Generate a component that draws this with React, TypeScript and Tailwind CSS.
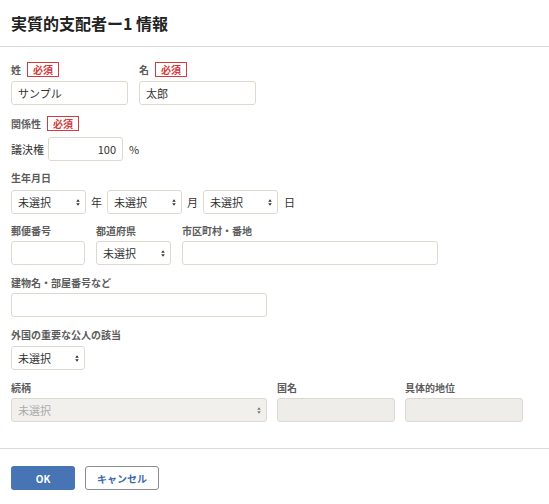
const font = { fontFamily: '"Noto Sans CJK JP", "Noto Sans", sans-serif' };

function Required() {
  return (
    <span className="ml-[6px] inline-flex items-center h-[15px] px-[5px] border border-[#d23c3c] text-[#d23c3c] text-[10px] font-bold leading-none">
      必須
    </span>
  );
}

function Label({ children, req = false }: { children: React.ReactNode; req?: boolean }) {
  return (
    <div className="flex items-center h-[15px] text-[10px] font-bold text-[#5c5c5c]">
      <span>{children}</span>
      {req && <Required />}
    </div>
  );
}

function Input({ w, value = '', right = false, disabled = false }: { w: string; value?: string; right?: boolean; disabled?: boolean }) {
  return (
    <div
      className={`${w} h-[24px] rounded-[3px] border border-[#ddd9cf] flex items-center px-[6px] text-[11px] text-[#333] ${
        right ? 'justify-end' : ''
      } ${disabled ? 'bg-[#eeede9]' : 'bg-white'}`}
    >
      {value}
    </div>
  );
}

function Select({ w, disabled = false }: { w: string; disabled?: boolean }) {
  return (
    <div
      className={`${w} h-[24px] rounded-[3px] border border-[#ddd9cf] flex items-center justify-between pl-[6px] pr-[5px] text-[11px] ${
        disabled ? 'bg-[#f1f0ed] text-[#aaa]' : 'bg-white text-[#333]'
      }`}
    >
      <span>未選択</span>
      <svg width="4" height="7" viewBox="0 0 4 7" className={disabled ? 'text-[#777]' : 'text-[#333]'}>
        <path d="M2 0.3 L3.8 2.8 L0.2 2.8 Z" fill="currentColor" />
        <path d="M2 6.7 L3.8 4.2 L0.2 4.2 Z" fill="currentColor" />
      </svg>
    </div>
  );
}

export default function App() {
  return (
    <div className="w-[549px] h-[504px] bg-white" style={font}>
      <div className="h-[47px] flex items-center px-[11px] border-b border-[#ddd9d2]">
        <h1 className="text-[16px] font-bold text-[#222] leading-none">実質的支配者ー1 情報</h1>
      </div>

      <div className="px-[11px] pt-[15px] pb-[26px] border-b border-[#ddd9d2]">
        <div className="flex gap-[11px]">
          <div>
            <Label req>姓</Label>
            <div className="mt-[4px]">
              <Input w="w-[117px]" value="サンプル" />
            </div>
          </div>
          <div>
            <Label req>名</Label>
            <div className="mt-[4px]">
              <Input w="w-[117px]" value="太郎" />
            </div>
          </div>
        </div>

        <div className="mt-[11px]">
          <Label req>関係性</Label>
        </div>
        <div className="mt-[6px] flex items-center text-[11px] text-[#333]">
          <span className="w-[37px] text-[11px] text-[#333]">議決権</span>
          <Input w="w-[75px]" value="100" right />
          <span className="ml-[6px]">%</span>
        </div>

        <div className="mt-[9px]">
          <Label>生年月日</Label>
        </div>
        <div className="mt-[5px] flex items-center text-[11px] text-[#333]">
          <Select w="w-[75px]" />
          <span className="w-[21px] text-center">年</span>
          <Select w="w-[75px]" />
          <span className="w-[21px] text-center">月</span>
          <Select w="w-[75px]" />
          <span className="ml-[6px]">日</span>
        </div>

        <div className="mt-[9px] flex gap-[11px]">
          <div>
            <Label>郵便番号</Label>
            <div className="mt-[3px]">
              <Input w="w-[74px]" />
            </div>
          </div>
          <div>
            <Label>都道府県</Label>
            <div className="mt-[3px]">
              <Select w="w-[75px]" />
            </div>
          </div>
          <div>
            <Label>市区町村・番地</Label>
            <div className="mt-[3px]">
              <Input w="w-[256px]" />
            </div>
          </div>
        </div>

        <div className="mt-[10px]">
          <Label>建物名・部屋番号など</Label>
          <div className="mt-[3px]">
            <Input w="w-[256px]" />
          </div>
        </div>

        <div className="mt-[10px]">
          <Label>外国の重要な公人の該当</Label>
          <div className="mt-[4px]">
            <Select w="w-[74px]" />
          </div>
        </div>

        <div className="mt-[10px] flex gap-[10px]">
          <div>
            <Label>続柄</Label>
            <div className="mt-[3px]">
              <Select w="w-[256px]" disabled />
            </div>
          </div>
          <div>
            <Label>国名</Label>
            <div className="mt-[3px]">
              <Input w="w-[118px]" disabled />
            </div>
          </div>
          <div>
            <Label>具体的地位</Label>
            <div className="mt-[3px]">
              <Input w="w-[118px]" disabled />
            </div>
          </div>
        </div>
      </div>

      <div className="px-[11px] pt-[17px] flex gap-[10px]">
        <button className="w-[64px] h-[24px] rounded-[3px] bg-[#4674b4] text-white text-[10px] font-bold">OK</button>
        <button className="w-[74px] h-[24px] rounded-[3px] border border-[#8c8c8c] bg-white text-[#3a6aae] text-[10px] font-bold">
          キャンセル
        </button>
      </div>
    </div>
  );
}
